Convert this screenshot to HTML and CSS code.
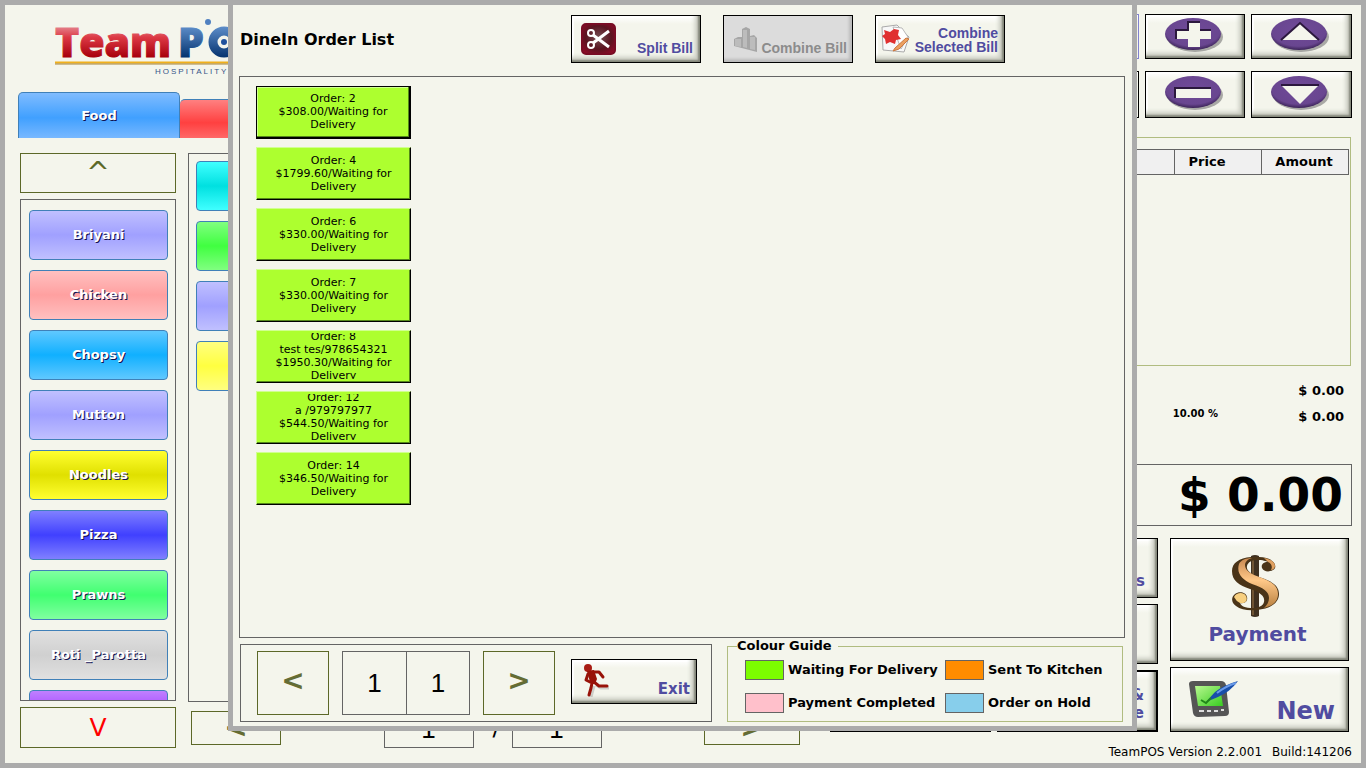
FILE: index.html
```html
<!DOCTYPE html>
<html lang="en">
<head>
<meta charset="utf-8">
<title>TeamPOS</title>
<link rel="stylesheet" href="styles.css">
</head>
<body>
<div class="app">
  <main class="menu">
    <div class="brand">
      <svg class="logo" viewBox="0 0 260 66" width="260" height="66" role="img" aria-label="TeamPOS Hospitality">
        <defs>
          <linearGradient id="red" gradientUnits="userSpaceOnUse" x1="0" y1="13" x2="0" y2="43"><stop offset="0" stop-color="#e4808a"/><stop offset=".35" stop-color="#dc3844"/><stop offset="1" stop-color="#a8000c"/></linearGradient>
          <linearGradient id="blue" gradientUnits="userSpaceOnUse" x1="0" y1="13" x2="0" y2="43"><stop offset="0" stop-color="#5c8cc8"/><stop offset="1" stop-color="#063470"/></linearGradient>
        </defs>
        <text x="0" y="43" class="logo-text"><tspan fill="url(#red)" stroke="url(#red)">Team</tspan><tspan x="123" fill="url(#blue)" stroke="url(#blue)">P</tspan></text>
        <circle cx="169" cy="28" r="11" fill="none" stroke="url(#blue)" stroke-width="9"/>
        <circle cx="169" cy="28" r="3" fill="#1f519c"/>
        <circle cx="153" cy="8" r="3" fill="#5080c0"/>
        <path d="M0 48.500H260" stroke="#f0b01c" stroke-width="2"/>
        <path d="M0 50H260" stroke="#a58338" stroke-width="1"/>
        <text x="100" y="60" class="logo-tag" fill="#345488">HOSPITALITY</text>
      </svg>
    </div>
    <nav class="tabs">
      <button class="tab tab-food">Food</button>
      <button class="tab tab-red" aria-label="Second menu"></button>
    </nav>
    <div class="browse">
      <div class="categories">
        <button class="scroll up">^</button>
        <div class="cat-list">
          <button class="tile lilac">Briyani</button>
          <button class="tile pink">Chicken</button>
          <button class="tile sky">Chopsy</button>
          <button class="tile lilac">Mutton</button>
          <button class="tile gold">Noodles</button>
          <button class="tile blue">Pizza</button>
          <button class="tile mint">Prawns</button>
          <button class="tile grey">Roti _Parotta</button>
          <button class="tile purple" aria-label="Next category"></button>
        </div>
        <button class="scroll down">V</button>
      </div>
      <div class="items">
        <div class="item-grid">
          <button class="tile cyan" aria-label="Item 1"></button>
          <button class="tile green" aria-label="Item 2"></button>
          <button class="tile lilac" aria-label="Item 3"></button>
          <button class="tile yellow" aria-label="Item 4"></button>
        </div>
        <div class="item-pager">
          <button class="step">&lt;</button>
          <div class="pages"><input value="1" aria-label="Page" readonly><span>/</span><input value="1" aria-label="Pages" readonly></div>
          <button class="step next">&gt;</button>
        </div>
      </div>
    </div>
  </main>

  <aside class="bill">
    <svg class="defs" width="0" height="0" aria-hidden="true">
      <defs>
        <radialGradient id="violet" cx=".5" cy=".4" r=".6"><stop offset="0" stop-color="#704a98"/><stop offset=".8" stop-color="#694690"/><stop offset="1" stop-color="#3c2458"/></radialGradient>
        <linearGradient id="brass" x1="0" y1="0" x2="0" y2="1"><stop offset="0" stop-color="#c88850"/><stop offset=".45" stop-color="#ffc888"/><stop offset="1" stop-color="#b88040"/></linearGradient>
        <radialGradient id="maroon" cx=".5" cy=".45" r=".7"><stop offset="0" stop-color="#765054"/><stop offset=".55" stop-color="#5a1420"/><stop offset="1" stop-color="#980828"/></radialGradient>
        <linearGradient id="screen" x1="0" y1="0" x2="1" y2="1"><stop offset="0" stop-color="#b8f890"/><stop offset="1" stop-color="#38cc20"/></linearGradient>
      </defs>
    </svg>
    <div class="keys">
      <button class="plate edge lilac-edge" aria-label="Key"></button>
      <button class="plate" aria-label="Add"><svg viewBox="0 0 60 36" width="60" height="36"><ellipse cx="31" cy="20" rx="28" ry="15" fill="#777" opacity=".6"/><ellipse cx="29" cy="17" rx="28" ry="16" fill="url(#violet)"/><path d="M24 5h12v8h11v9H36v8H24v-8H12v-9h12z" fill="#f4f5ec"/><path d="M12 22v-9h12V5h12M36 13h11" fill="none" stroke="#2c183e" stroke-width="2"/></svg></button>
      <button class="plate" aria-label="Up"><svg viewBox="0 0 60 36" width="60" height="36"><ellipse cx="31" cy="20" rx="28" ry="15" fill="#777" opacity=".6"/><ellipse cx="29" cy="17" rx="28" ry="16" fill="url(#violet)"/><path d="M30 6L49 23H11z" fill="#f4f5ec"/><path d="M11 23L30 6L49 23" fill="none" stroke="#2c183e" stroke-width="2"/></svg></button>
      <button class="plate edge" aria-label="Key"></button>
      <button class="plate" aria-label="Remove"><svg viewBox="0 0 60 36" width="60" height="36"><ellipse cx="31" cy="20" rx="28" ry="15" fill="#777" opacity=".6"/><ellipse cx="29" cy="17" rx="28" ry="16" fill="url(#violet)"/><path d="M11 13h36v10H11z" fill="#f4f5ec"/><path d="M11 23V13h36" fill="none" stroke="#2c183e" stroke-width="2"/></svg></button>
      <button class="plate" aria-label="Down"><svg viewBox="0 0 60 36" width="60" height="36"><ellipse cx="31" cy="20" rx="28" ry="15" fill="#777" opacity=".6"/><ellipse cx="29" cy="17" rx="28" ry="16" fill="url(#violet)"/><path d="M11 10h38L30 29z" fill="#f4f5ec"/><path d="M11 10h38" fill="none" stroke="#2c183e" stroke-width="2"/></svg></button>
    </div>
    <div class="lines">
      <table>
        <thead><tr><td></td><th class="price">Price</th><th class="amount">Amount</th></tr></thead>
      </table>
    </div>
    <div class="sums">
      <span class="sum">$ 0.00</span>
      <span class="rate">10.00 %</span><span class="sum">$ 0.00</span>
    </div>
    <div class="total">$ 0.00</div>
    <div class="actions">
      <div class="action-grid">
        <button class="plate" aria-label="Action 1"></button><button class="plate act">s</button>
        <button class="plate" aria-label="Action 2"></button><button class="plate" aria-label="Action 3"></button>
        <button class="plate" aria-label="Action 4"></button><button class="plate act thick">&amp;<br>e</button>
      </div>
      <div class="pay-col">
        <button class="plate pay">
          <svg viewBox="0 0 50 64" width="50" height="64">
            <path d="M20 2q4-2 8 0v60q-4 2-8 0z" fill="#3f3020"/>
            <path d="M22 3v58" stroke="#a07848" stroke-width="1"/>
            <path d="M20 3C8 4 1 9 1 17C1 27 8 31 19 35C31 39 34 43 33 48C32 52 27 54 22 54C14 54 10 52 9 49C14 50 17 47 16 43C15 38 8 37 4 40C0 43 0 49 5 52C10 56 18 57 26 56C39 55 48 49 48 40C48 32 42 28 31 24C20 20 15 17 16 12C17 8 21 6 26 6C32 6 35 7 37 8C32 8 30 11 31 14C33 19 42 18 44 14C46 8 38 3 28 3z" fill="#4a3418"/>
            <path d="M8 10C5 20 12 26 21 30C33 34 38 38 38 44C38 48 36 51 33 54C42 52 47 47 47 40C47 32 41 28 31 24C20 20 14 17 14 11C14 8 17 5 21 4C15 4 10 6 8 10z" fill="url(#brass)"/>
            <path d="M9 49C15 50 17 46 15 42C12 37 5 39 3 43q2 4 6 6z" fill="#f8d080"/>
            <path d="M37 8c3 1 5 5 3 8c2 0 4-2 4-4c0-4-5-7-11-8z" fill="#e0a060"/>
          </svg>
          <span>Payment</span>
        </button>
        <button class="plate new">
          <svg viewBox="0 0 54 40" width="54" height="40"><path d="M2 4q0-3 4-3h28q4 0 5 4l3 27q0 4-4 4l-27 1q-4 0-5-4z" fill="#555"/><path d="M8 6h25l3 20H11z" fill="url(#screen)"/><path d="M12 31h5M20 31h4M27 31h4M34 30h3" stroke="#ddd" stroke-width="2"/><path d="M19 22L28 12Q37 5 51 1Q43 12 31 17z" fill="#184eaa"/><path d="M30 13Q39 6 49 3" stroke="#6a9ae8" stroke-width="2" fill="none"/><path d="M14 20l5 3 5-5" fill="none" stroke="#208818" stroke-width="2"/></svg>
          <span>New</span>
        </button>
      </div>
    </div>
    <footer class="version"><span>TeamPOS Version 2.2.001</span><span>Build:141206</span></footer>
  </aside>

  <section class="dialog" role="dialog" aria-labelledby="dlg-title">
    <header class="dlg-head">
      <h1 id="dlg-title">DineIn Order List</h1>
      <div class="dlg-tools">
        <button class="plate tool">
          <svg viewBox="0 0 36 32" width="36" height="32"><rect x="1" y="1" width="33" height="30" rx="4" fill="url(#maroon)" stroke="#780c24" stroke-width="2"/><g fill="none" stroke="#fff" stroke-width="2"><circle cx="10" cy="10" r="3"/><circle cx="10" cy="22" r="3"/><path d="M12 12L28 24M12 20L28 8" stroke-width="3"/></g></svg>
          <span>Split Bill</span>
        </button>
        <button class="plate tool off" disabled>
          <svg viewBox="0 0 28 28" width="28" height="28"><path d="M1 14l4-2h4V4l4-2 4 2v7l4-1 3 3v14L1 21z" fill="#a6a6a6"/><path d="M2 14h6v8l-6-1zM10 5h4v18l-4-1zM17 12h5v13l-5-1z" fill="#bcbcbc"/></svg>
          <span>Combine Bill</span>
        </button>
        <button class="plate tool sel">
          <svg viewBox="0 0 32 30" width="32" height="30"><path d="M2 3l15-2 12 12-5 15L3 26z" fill="#f8f8f8" stroke="#aaa"/><path d="M13 3l9 1 6 9-7 12z" fill="#fff" stroke="#b8b8b8"/><path d="M4 6l6 2 4-3 5 1-1 5 3 4-5 1-1 4-5-2-4 2-1-5-3-3 3-2z" fill="#e03030"/><path d="M15 24L26 14l3 1-10 10-6 2z" fill="#eba060" stroke="#cc7840"/></svg>
          <span>Combine<br>Selected Bill</span>
        </button>
      </div>
    </header>
    <div class="orders">
      <button class="order first">Order: 2<br>$308.00/Waiting for<br>Delivery</button>
      <button class="order">Order: 4<br>$1799.60/Waiting for<br>Delivery</button>
      <button class="order">Order: 6<br>$330.00/Waiting for<br>Delivery</button>
      <button class="order">Order: 7<br>$330.00/Waiting for<br>Delivery</button>
      <button class="order"><span class="clip">Order: 8<br>test tes/978654321<br>$1950.30/Waiting for<br>Delivery</span></button>
      <button class="order"><span class="clip">Order: 12<br>a /979797977<br>$544.50/Waiting for<br>Delivery</span></button>
      <button class="order">Order: 14<br>$346.50/Waiting for<br>Delivery</button>
    </div>
    <div class="dlg-foot">
      <div class="nav">
        <button class="step">&lt;</button>
        <div class="page-boxes"><input value="1" aria-label="Page" readonly><input value="1" aria-label="Pages" readonly></div>
        <button class="step">&gt;</button>
        <button class="plate exit">
          <svg viewBox="0 0 28 34" width="28" height="34"><g fill="none" stroke="#777" stroke-opacity=".3" stroke-width="3" transform="translate(2 2)"><path d="M12 20L17 23L25 23M10 21L7 32"/></g><circle cx="6" cy="5" r="4" fill="#a81c14"/><path d="M5 8l7-1 3 9-2 5-5-2z" fill="#981208"/><g fill="none" stroke="#981208" stroke-width="3" stroke-linejoin="round" stroke-linecap="round"><path d="M10 9l7 0 4 5M6 11l-2 6 4 2M12 19l5 4 8 0M10 20l-1 5-2 7"/></g></svg>
          <span>Exit</span>
        </button>
      </div>
      <fieldset class="guide">
        <legend>Colour Guide</legend>
        <div class="key"><i class="sw waiting"></i>Waiting For Delivery</div>
        <div class="key"><i class="sw sent"></i>Sent To Kitchen</div>
        <div class="key"><i class="sw paid"></i>Payment Completed</div>
        <div class="key"><i class="sw hold"></i>Order on Hold</div>
      </fieldset>
    </div>
  </section>
</div>
</body>
</html>
```
FILE: styles.css
```css
* { box-sizing: border-box; }
body {
  margin: 0;
  background: #f4f5ec;
  color: #000;
  font: bold 13px/16px "DejaVu Sans", sans-serif;
}
button, input {
  margin: 0;
  padding: 0;
  border-radius: 0;
  font: inherit;
  color: inherit;
  background: #f4f5ec;
}
.app {
  position: relative;
  display: grid;
  grid-template-columns: 1fr 522px;
  gap: 30px;
  min-height: 100vh;
  padding: 9px 9px 3px 13px;
  border: 5px solid #ababab;
}
.menu { display: flex; flex-direction: column; min-width: 0; }
.brand { height: 78px; padding: 0 0 0 37px; }
.logo { display: block; }
.logo-text { font: 800 41px "Open Sans", sans-serif; stroke-width: 1px; }
.logo-tag { font: 8px "Liberation Sans", sans-serif; letter-spacing: 2px; }
.tabs { display: flex; align-items: flex-end; height: 46px; }
.tab {
  width: 162px;
  height: 39px;
  border: 1px solid #4080b8;
  border-bottom: 0;
  border-radius: 5px 5px 0 0;
  color: #fff;
  text-shadow: 1px 1px #101050;
}
.tab-food { height: 46px; background: linear-gradient(#80bcff, #40a0ff 55%, #78b8ff); }
.tab-red { border-left: 0; background: linear-gradient(#ff8080, #ff4040 60%, #ff6868); }
.browse { display: flex; gap: 12px; padding: 15px 0 0 2px; }
.categories { display: flex; flex-direction: column; gap: 6px; width: 156px; }
.scroll { height: 40px; border: 1px solid #5c6828; font-weight: normal; }
.up { color: #5c6828; font-size: 28px; }
.down { height: 41px; color: #f00; font-size: 25px; }
.cat-list {
  display: flex;
  flex-direction: column;
  gap: 10px;
  height: 502px;
  padding: 10px 7px 0 8px;
  overflow: hidden;
  border: 1px solid #646464;
}
.tile {
  flex: none;
  height: 50px;
  border: 1px solid #4080b8;
  border-radius: 4px;
  color: #fff;
  text-shadow: 1px 1px #101050;
}
.lilac { background: linear-gradient(#c0c0ff, #a0a0ff 50%, #c0c0ff); }
.pink { background: linear-gradient(#ffc0c0, #ffa0a0 50%, #ffc0c0); }
.sky { background: linear-gradient(#60c8ff, #10b0ff 50%, #60c8ff); }
.gold { background: linear-gradient(#ffff30, #e0e000 50%, #ffff30); }
.blue { background: linear-gradient(#8080ff, #4040ff 50%, #8080ff); }
.mint { background: linear-gradient(#80ffa0, #40ff70 50%, #80ffa0); }
.grey { background: linear-gradient(#e0e0e0, #d0d0d0 50%, #e0e0e0); }
.purple { background: linear-gradient(#c080ff, #a040ff 50%, #c080ff); }
.cyan { background: linear-gradient(#40ffff, #00e0e0 50%, #40ffff); }
.green { background: linear-gradient(#80ff80, #40ff40 50%, #80ff80); }
.yellow { background: linear-gradient(#ffff80, #ffff40 50%, #ffff80); }
.items { flex: 1; display: flex; flex-direction: column; gap: 9px; }
.item-grid {
  display: flex;
  flex-direction: column;
  gap: 10px;
  height: 549px;
  padding: 7px;
  border: 1px solid #646464;
}
.item-grid .tile { width: 140px; }
.item-pager { display: flex; justify-content: space-between; padding-left: 3px; }
.step { border: 1px solid #5c6828; color: #646c34; font-size: 28px; }
.item-pager .step { width: 90px; height: 34px; }
.item-pager .next { width: 96px; }
.pages { display: flex; gap: 19px; }
.pages span { align-self: center; width: 0; font-size: 18px; }
.item-pager input { width: 90px; height: 37px; border: 1px solid #646464; text-align: center; font: 26px "Liberation Sans", sans-serif; }

.bill { display: flex; flex-direction: column; }
.defs { display: block; }
.keys { display: grid; grid-template-columns: 101px 100px 101px; gap: 12px 6px; justify-content: end; }
.plate {
  border: 1px solid #000;
  color: #504ca0;
  background: linear-gradient(#fff, #f4f5ec 8px, #f4f5ec);
  box-shadow: inset -2px -2px 2px #828478, inset -5px -5px 4px #c8cac0, inset 2px 2px 1px #fff;
}
.keys .plate { height: 45px; display: flex; justify-content: center; align-items: center; }
.keys .plate:nth-child(n+4) { height: 47px; }
.keys .plate:not(.edge) { padding: 0 3px 3px 0; }
.keys .edge { box-shadow: none; }
.keys .lilac-edge { border-color: #8080d0; }
.lines { height: 229px; margin: 19px 1px 0 0; padding: 11px 1px 0; border: 1px solid #b0bc80; }
table { width: 100%; border-collapse: collapse; background: #f0f0f0; }
th, td { height: 25px; padding: 0; border: 1px solid #646464; }
.price { width: 87px; padding-right: 22px; }
.amount { width: 87px; padding-right: 2px; }
.sums { display: grid; grid-template-columns: 1fr 126px; row-gap: 10px; padding: 17px 8px 39px 0; text-align: right; }
.sums .sum { grid-column: 2; }
.rate { grid-column: 1; font-size: 10px; line-height: 10px; }
.total { height: 62px; padding-right: 8px; border: 1px solid #646464; font-size: 47px; line-height: 60px; text-align: right; }
.actions { display: flex; gap: 12px; padding: 12px 3px 0 0; }
.action-grid { flex: 1; display: grid; grid-template-columns: 1fr 1fr; grid-template-rows: 60px 60px 62px; gap: 6px; }
.act { padding: 26px 12px 0 0; text-align: right; font-size: 15px; line-height: 18px; }
.thick { padding-top: 6px; border-width: 2px; }
.pay-col { display: flex; flex-direction: column; gap: 6px; width: 179px; }
.pay { display: flex; flex-direction: column; align-items: center; gap: 6px; height: 123px; padding: 15px 4px 0 0; font-size: 20px; line-height: 20px; }
.pay svg { margin-right: 4px; }
.new { display: flex; align-items: center; justify-content: space-between; height: 65px; padding: 0 13px 0 16px; font-size: 24px; }
.new span { padding-top: 22px; }
.version { display: flex; justify-content: flex-end; gap: 10px; padding-top: 12px; font-size: 12px; font-weight: normal; }

.dialog {
  position: absolute;
  top: -5px;
  left: 223px;
  right: 224px;
  padding: 10px 7px 4px 6px;
  border: 5px solid #ababab;
  background: #f4f5ec;
}
.dlg-head { display: flex; height: 61px; }
h1 { width: 331px; margin: 16px 0 0 1px; font-size: 16px; line-height: 18px; }
.dlg-tools { display: flex; gap: 22px; }
.tool {
  display: flex;
  align-items: center;
  justify-content: space-between;
  width: 130px;
  height: 48px;
  padding: 0 7px 0 9px;
  font: bold 14px/14px "Liberation Sans", sans-serif;
  text-align: right;
  white-space: nowrap;
}
.tool svg { flex: none; }
.tool span { padding-top: 18px; }
.off { padding-right: 5px; color: #8c8c8c; background: #dcdcdc; box-shadow: inset -3px -3px 3px #bbb; }
.sel { padding: 0 6px 0 4px; }
.sel span { padding: 2px 0 0; }
.orders {
  display: flex;
  flex-direction: column;
  gap: 8px;
  height: 562px;
  padding: 9px 16px;
  border: 1px solid #646464;
}
.order {
  width: 155px;
  height: 53px;
  padding-bottom: 1px;
  border: 1px solid;
  border-color: #d0ff90 #000 #000 #d0ff90;
  background: #adff2f;
  box-shadow: inset -1px -1px #548818;
  font-size: 11px;
  line-height: 13px;
  font-weight: normal;
}
.first { border: 1px solid #000; border-right-width: 2px; border-bottom-width: 2px; box-shadow: inset -1px -1px #548818, inset 1px 1px #d0ff90; }
.clip { display: flex; align-items: center; height: 46px; overflow: hidden; justify-content: center; }
.dlg-foot { display: flex; justify-content: space-between; padding: 6px 2px 0 1px; }
.nav { display: flex; width: 472px; height: 78px; padding: 6px 14px 6px 16px; border: 1px solid #646464; }
.nav .step { width: 72px; height: 64px; padding-bottom: 4px; }
.page-boxes { display: flex; margin: 0 13px; }
.page-boxes input { width: 65px; height: 64px; border: 1px solid #646464; text-align: center; font: 26px "Liberation Sans", sans-serif; }
.page-boxes input + input { width: 64px; margin-left: -1px; }
.exit { display: flex; justify-content: space-between; width: 126px; height: 45px; margin: 8px 0 0 16px; padding: 3px 6px 0 10px; font-size: 15px; }
.exit span { padding-top: 18px; }
.guide {
  display: grid;
  grid-template-columns: 200px 1fr;
  row-gap: 13px;
  align-content: start;
  width: 396px;
  height: 84px;
  margin: -6px 0 0;
  padding: 6px 17px 0;
  border: 1px solid #b0bc80;
}
.guide legend { margin-left: -8px; padding: 0 6px 0 0; }
.key { display: flex; align-items: center; gap: 4px; height: 20px; white-space: nowrap; }
.sw { flex: none; width: 39px; height: 20px; border: 1px solid #646464; }
.waiting { background: #7cfc00; }
.sent { background: #ff8c00; }
.paid { background: #ffc0cb; }
.hold { background: #87ceeb; }
```
